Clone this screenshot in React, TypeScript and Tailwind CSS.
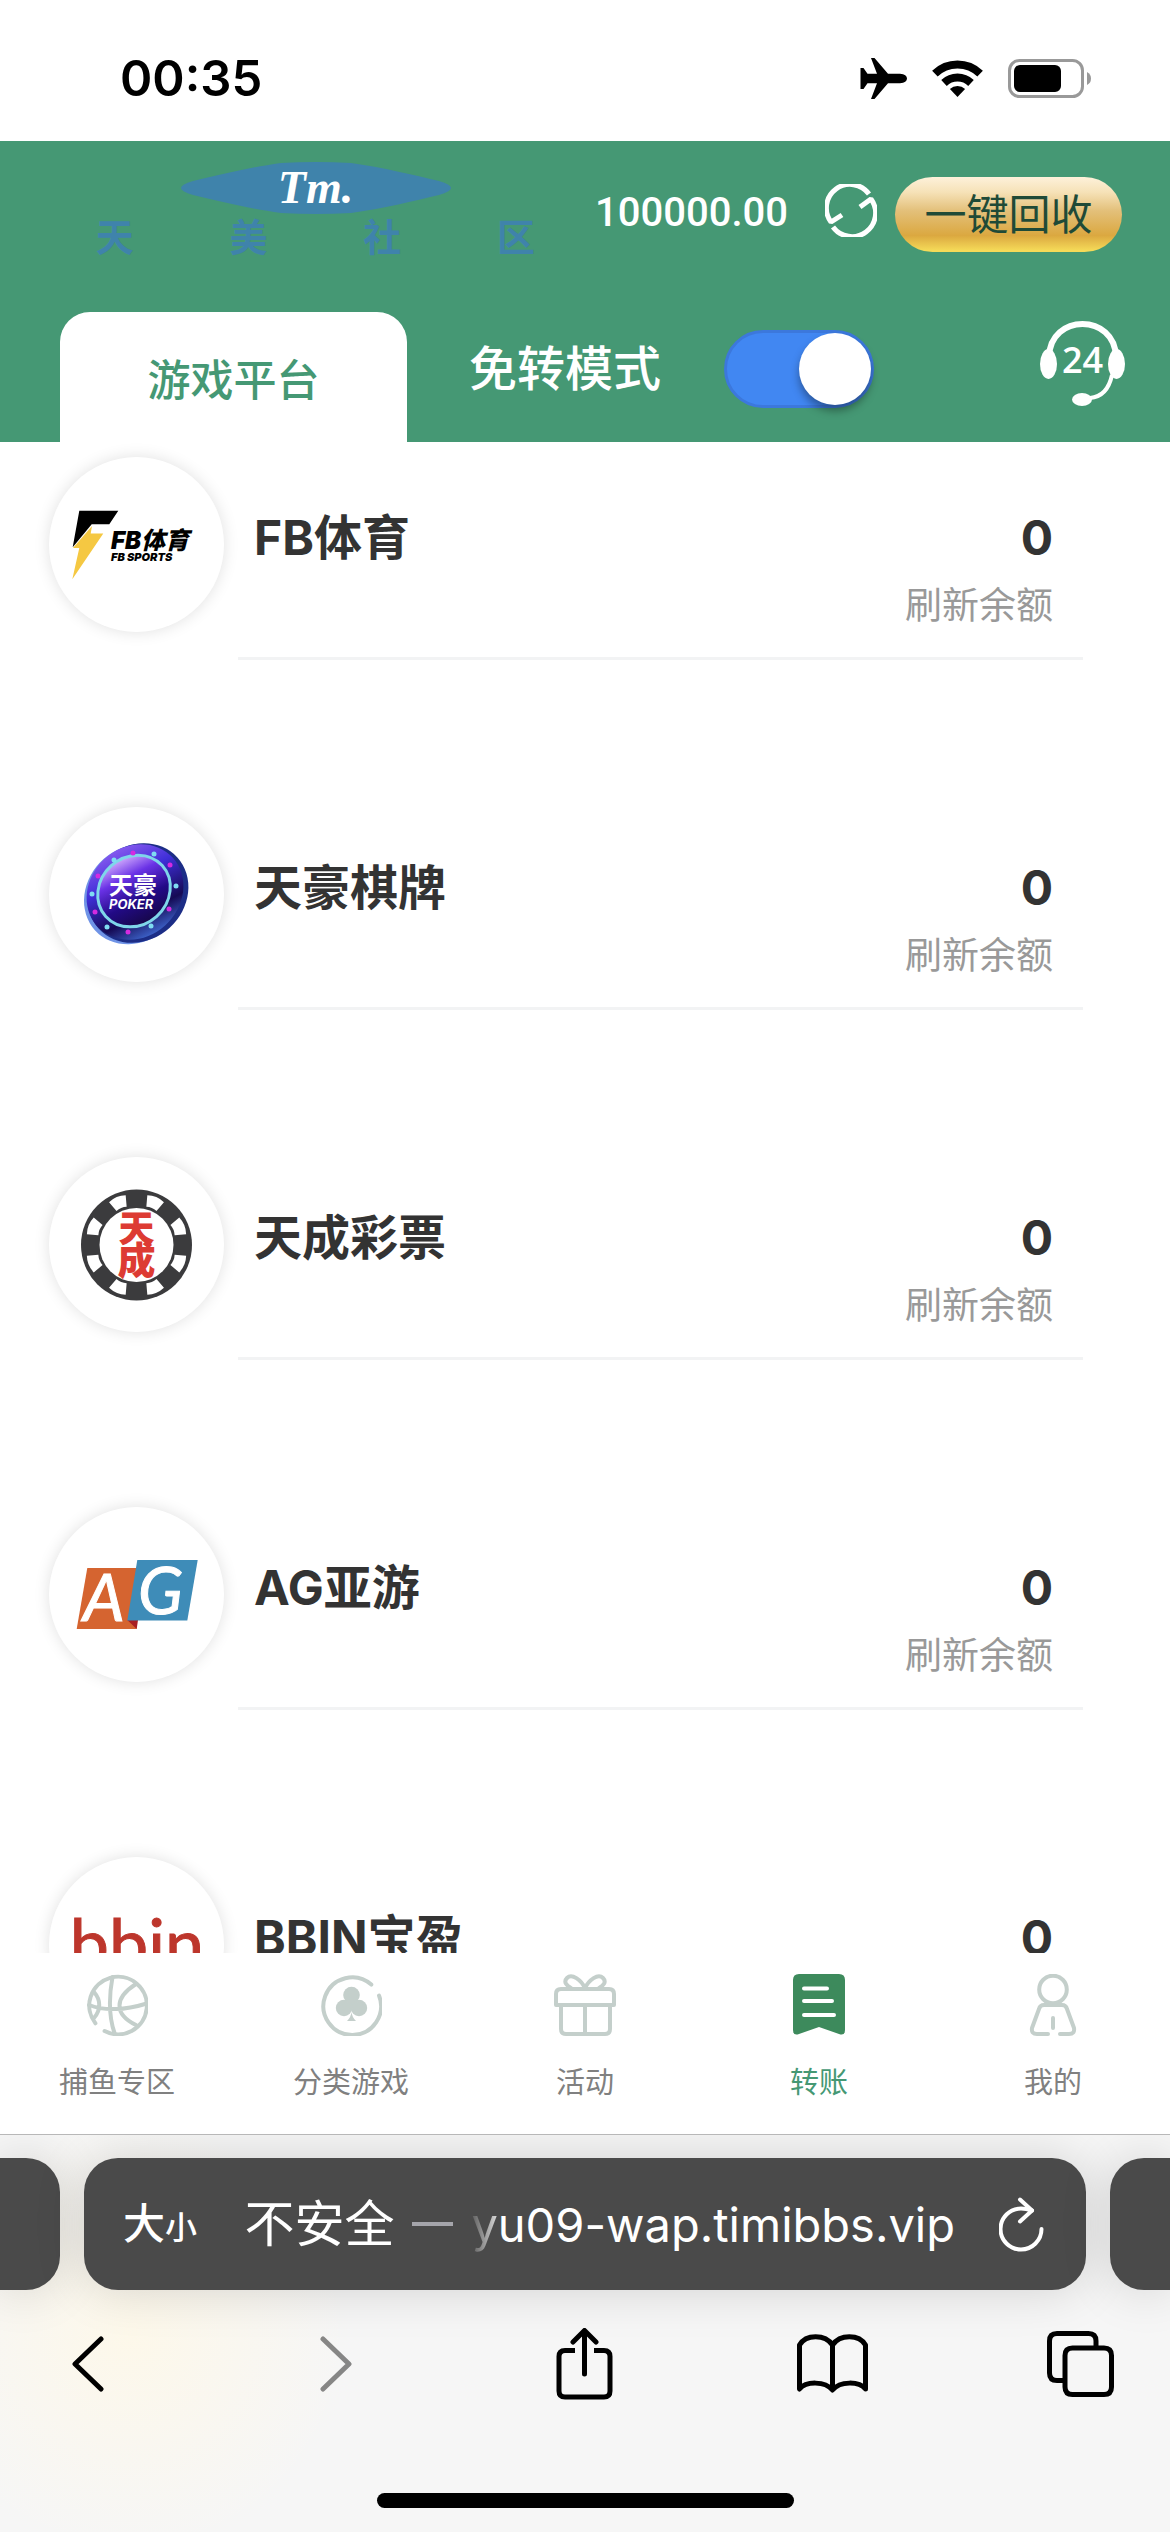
import { useState, type ReactNode } from 'react';

const CHIP_DOTS = [
  { x: 65, y: 53, fill: '#7fdcf2' },
  { x: 105, y: 47, fill: '#7fdcf2' },
  { x: 127, y: 79, fill: '#7fdcf2' },
  { x: 43, y: 87, fill: '#7fdcf2' },
  { x: 58, y: 120, fill: '#7fdcf2' },
  { x: 102, y: 119, fill: '#7fdcf2' },
  { x: 84, y: 46, fill: '#d42be0' },
  { x: 121, y: 58, fill: '#d42be0' },
  { x: 49, y: 69, fill: '#d42be0' },
  { x: 46, y: 105, fill: '#d42be0' },
  { x: 79, y: 125, fill: '#d42be0' },
  { x: 120, y: 102, fill: '#d42be0' },
];

const CHIP_SLOTS = [22.5, 67.5, 112.5, 157.5, 202.5, 247.5, 292.5, 337.5];

function FbLogo() {
  return (
    <svg viewBox="0 0 175 175" className="size-full">
      <path d="M30.3 53.7H69.3L60.3 67.3H42.7L23.7 90.3Z" fill="#000" />
      <path d="M43 69L41.7 76.5H54.3L23.3 122.3L30.3 91H24Z" fill="#f5c842" />
      <text className="font-['Inter','Noto_Sans_CJK_SC',sans-serif] font-black italic">
        <tspan x="62" y="92" className="text-[24px]">
          FB体育
        </tspan>
        <tspan x="62" y="104" className="text-[11px]">
          FB SPORTS
        </tspan>
      </text>
    </svg>
  );
}

function PokerLogo() {
  return (
    <svg viewBox="0 0 175 175" className="size-full">
      <defs>
        <linearGradient id="chipBase" x1="0.7" y1="0" x2="0.4" y2="1">
          <stop offset="0" stopColor="#8b5cf0" />
          <stop offset="0.35" stopColor="#3f2fd8" />
          <stop offset="0.75" stopColor="#150a55" />
          <stop offset="1" stopColor="#3c62c8" />
        </linearGradient>
        <linearGradient id="chipFace" x1="0.7" y1="0" x2="0.4" y2="1">
          <stop offset="0" stopColor="#d9b4ff" />
          <stop offset="0.3" stopColor="#6a32e6" />
          <stop offset="0.65" stopColor="#220a86" />
          <stop offset="1" stopColor="#160748" />
        </linearGradient>
      </defs>
      <ellipse cx="86" cy="87" rx="54" ry="47" transform="rotate(-42 86 87)" fill="#6f93e6" />
      <ellipse cx="89" cy="86" rx="53" ry="47" transform="rotate(-42 89 86)" fill="#1c2d86" />
      <ellipse cx="86" cy="85" rx="51" ry="45" transform="rotate(-42 86 85)" fill="url(#chipBase)" />
      <ellipse
        cx="85"
        cy="84"
        rx="38"
        ry="34"
        transform="rotate(-42 85 84)"
        fill="url(#chipFace)"
        stroke="#7fd6ea"
        strokeWidth="3"
      />
      {CHIP_DOTS.map((d) => (
        <circle key={`${d.x}-${d.y}`} cx={d.x} cy={d.y} r="2.5" fill={d.fill} />
      ))}
      <text fill="#fff" className="font-['Inter','Noto_Sans_CJK_SC',sans-serif] font-bold">
        <tspan x="60" y="87" className="text-[24px]">
          天豪
        </tspan>
        <tspan x="60" y="102" className="text-[13px] italic">
          POKER
        </tspan>
      </text>
    </svg>
  );
}

function LotteryLogo() {
  return (
    <svg viewBox="0 0 175 175" className="size-full">
      <circle cx="87.5" cy="88" r="55.5" fill="#3b3b3d" />
      {CHIP_SLOTS.map((angle) => (
        <path
          key={angle}
          d="M78.5 38Q87.5 34.5 96.5 38L93 49Q87.5 47 82 49Z"
          fill="#fff"
          transform={`rotate(${angle} 87.5 88)`}
        />
      ))}
      <circle cx="87.5" cy="88" r="37" fill="#fff" />
      <text fill="#dd3b33" textAnchor="middle" className="font-['Noto_Sans_CJK_SC',sans-serif] font-black">
        <tspan x="87.5" y="85" className="text-[36px]">
          天
        </tspan>
        <tspan x="87.5" y="117" className="text-[38px]">
          成
        </tspan>
      </text>
    </svg>
  );
}

function AgLogo() {
  return (
    <svg viewBox="0 0 175 175" className="size-full">
      <path d="M38.3 61H87.7V122H27.7Z" fill="#d56430" />
      <path d="M78.3 113H89L87.7 122Z" fill="#a81f24" />
      <path d="M88.3 53H148.7L138.3 113.5H78.3Z" fill="#3e8cb8" />
      <text fill="#fff" stroke="#fff" className="font-['Lato',sans-serif] text-[66px] italic">
        <tspan x="34" y="114">
          A
        </tspan>
        <tspan x="89" y="107">
          G
        </tspan>
      </text>
    </svg>
  );
}

function BbinLogo() {
  return (
    <svg viewBox="0 0 175 175" className="size-full">
      <text
        x="88"
        y="112"
        textAnchor="middle"
        fill="#bd362c"
        stroke="#bd362c"
        strokeWidth="1"
        className="font-['Lato',sans-serif] text-[70px]"
      >
        bbin
      </text>
    </svg>
  );
}

const PLATFORMS = [
  { id: 'fb', name: 'FB体育', balance: '0', logo: <FbLogo /> },
  { id: 'th', name: '天豪棋牌', balance: '0', logo: <PokerLogo /> },
  { id: 'tc', name: '天成彩票', balance: '0', logo: <LotteryLogo /> },
  { id: 'ag', name: 'AG亚游', balance: '0', logo: <AgLogo /> },
  { id: 'bbin', name: 'BBIN宝盈', balance: '0', logo: <BbinLogo /> },
];

function NavIcon({ children }: { children: ReactNode }) {
  return (
    <svg
      viewBox="0 0 62 62"
      fill="none"
      stroke="#c4cfcb"
      strokeWidth="4"
      strokeLinecap="round"
      strokeLinejoin="round"
      className="size-[62px]"
    >
      {children}
    </svg>
  );
}

const NAV = [
  {
    label: '捕鱼专区',
    icon: (
      <NavIcon>
        <path d="M9.4 49.3A28.8 28.8 0 1 1 18.6 57" />
        <path d="M26.5 3C23 22 22 40 28.5 59M3 31C18 37 40 36 59 30M50 10C28 24 28 40 50 51M8 18C15 26 15 36 8 44" />
      </NavIcon>
    ),
  },
  {
    label: '分类游戏',
    icon: (
      <NavIcon>
        <path d="M51.3 10.6A28.8 28.8 0 1 0 59 21.6" />
        <g fill="#c4cfcb" stroke="none">
          <circle cx="31.5" cy="21" r="8.3" />
          <circle cx="24" cy="34" r="8.2" />
          <circle cx="39" cy="34" r="8.2" />
          <path d="M27 24H36V34H27ZM31.5 38Q32 43 36 47H27Q31 43 31.5 38Z" />
        </g>
      </NavIcon>
    ),
  },
  {
    label: '活动',
    icon: (
      <NavIcon>
        <path d="M2 31V20Q2 15 7 15H55Q60 15 60 20V31ZM7 32V55Q7 60 12 60H51Q56 60 56 55V32M31 32V59" />
        <path d="M31 14C27 6 18 -1 13 4C9 8 13 12 17 14M31 14C35 6 44 -1 49 4C53 8 49 12 45 14" />
      </NavIcon>
    ),
  },
  {
    label: '转账',
    active: true,
    icon: (
      <NavIcon>
        <path
          d="M11 0H51Q57 0 57 6V56Q57 62 51 60L31 53L11 60Q5 62 5 56V6Q5 0 11 0Z"
          fill="#3d8a5c"
          stroke="none"
        />
        <path d="M16 14.5H39M16 27H44M16 41H46" stroke="#fff" />
      </NavIcon>
    ),
  },
  {
    label: '我的',
    icon: (
      <NavIcon>
        <circle cx="31" cy="15.5" r="13.8" />
        <path d="M26 60H15Q9 60 10 54L17 35Q18 31 22 31H40Q44 31 45 35L52 54Q53 60 47 60H38M31 44V54" />
      </NavIcon>
    ),
  },
];

function StatusBar() {
  return (
    <div className="flex h-[141px] shrink-0 items-center justify-between bg-white pt-[15px] pr-[79px] pl-[120px]">
      <span className="text-[49px] leading-none font-semibold">00:35</span>
      <div className="flex items-center gap-[25px]">
        <svg viewBox="0 0 47 41" className="h-[41px] w-[47px]">
          <path d="M11 0H14.5L28 15.8H40Q47 16.5 47 20.5T40 25.2H28L14.5 41H11L17 25.2H7.5L3.5 31H0.5V10H3.5L7.5 15.8H17Z" />
        </svg>
        <svg viewBox="0 0 51 37" className="h-[37px] w-[51px]" fill="none" stroke="#000">
          <path d="M2.9 13.6A32.5 32.5 0 0 1 48.1 13.6" strokeWidth="8" />
          <path d="M12 23A19.5 19.5 0 0 1 39 23" strokeWidth="8" />
          <path d="M25.5 37L17.9 29.1A11 11 0 0 1 33.1 29.1Z" fill="#000" stroke="none" />
        </svg>
        <svg viewBox="0 0 83 39" className="h-[39px] w-[83px]">
          <rect x="1.5" y="1.5" width="73" height="36" rx="10" fill="none" stroke="#999" strokeWidth="3" />
          <rect x="6" y="6" width="47" height="27" rx="6" />
          <path d="M79 13Q83 15 83 19.5T79 26Z" fill="#999" />
        </svg>
      </div>
    </div>
  );
}

function Header() {
  const [auto, setAuto] = useState(true);

  return (
    <header className="flex shrink-0 flex-col bg-[#459874] pt-[20px]">
      <div className="flex items-start pr-[48px] pl-[48px]">
        {/* Brand */}
        <div className="flex w-[535px] shrink-0 flex-col items-center">
          <div className="relative flex h-[54px] w-[270px] items-center justify-center">
            <svg viewBox="0 0 270 54" className="absolute inset-0 size-full">
              <path
                d="M100 2Q135 0 170 2C205 7 232 14 258 20Q282 27 258 34C232 40 205 47 170 52Q135 54 100 52C65 47 38 40 12 34Q-12 27 12 20C38 14 65 7 100 2Z"
                fill="#3f83ab"
              />
            </svg>
            <span className="relative font-['Liberation_Serif',serif] text-[46px] leading-none font-bold text-white italic">
              Tm.
            </span>
          </div>
          <div className="flex w-full justify-around font-['Noto_Sans_CJK_SC',sans-serif] text-[38px] leading-[40px] font-bold text-[#3f83ab]">
            <span>天</span>
            <span>美</span>
            <span>社</span>
            <span>区</span>
          </div>
        </div>

        <div className="flex flex-1 items-center justify-between pt-[16px] pl-[12px]">
          <span className="pb-[4px] font-['Roboto',sans-serif] text-[40px] leading-none font-medium text-white">
            100000.00
          </span>
          <div className="flex shrink-0 items-center gap-[18px]">
            <button aria-label="刷新" className="pb-[8px]">
              <svg viewBox="0 0 52 53" className="block h-[53px] w-[52px]" fill="none" stroke="#fff" strokeWidth="5">
                <path d="M44 10A23.2 23.2 0 0 0 6 38L17 31" strokeLinejoin="bevel" />
                <path d="M8 43A23.4 23.4 0 0 0 46 15L35 23" strokeLinejoin="bevel" />
              </svg>
            </button>
            <button className="h-[75px] w-[227px] rounded-full bg-[linear-gradient(180deg,#fdf1da_0%,#f6e2b8_20%,#e3c07a_45%,#dba840_78%,#f5da58_98%)] text-[42px] leading-none text-[#1f4a37]">
              一键回收
            </button>
          </div>
        </div>
      </div>

      <div className="flex items-end pt-[57px] pr-[45px] pl-[60px]">
        <button className="h-[130px] w-[347px] rounded-t-[30px] bg-white pt-[7px] text-[43px] font-medium text-[#459874]">
          游戏平台
        </button>
        <div className="flex flex-1 items-end justify-between pb-[34px]">
          <label className="flex items-center gap-[63px] pl-[62px] text-[48px] leading-none font-medium text-white">
            免转模式
            <input
              type="checkbox"
              role="switch"
              checked={auto}
              onChange={(e) => setAuto(e.target.checked)}
              className="peer sr-only"
            />
            <span className="flex h-[78px] w-[150px] items-center rounded-full border-[3px] border-[#3c78dc] bg-[#4187f2] peer-checked:justify-end">
              <span className="size-[72px] rounded-full bg-white shadow-[0_6px_8px_rgba(0,0,0,0.35)]" />
            </span>
          </label>
          <button aria-label="客服" className="pb-[2px]">
            <svg viewBox="0 0 85 85" className="block size-[85px]" fill="none" stroke="#fff">
              <path d="M9 36C10 -8 75 -8 76 36" strokeWidth="6" />
              <path d="M72 54C69 68 62 76 50 77" strokeWidth="4" />
              <g fill="#fff" stroke="none">
                <ellipse cx="8.5" cy="43" rx="8.5" ry="15" />
                <ellipse cx="76.5" cy="43" rx="8.5" ry="15" />
                <ellipse cx="42" cy="78.5" rx="10" ry="6.5" />
                <text x="42.5" y="52" textAnchor="middle" className="font-['Open_Sans',sans-serif] text-[36px] font-semibold">
                  24
                </text>
              </g>
            </svg>
          </button>
        </div>
      </div>
    </header>
  );
}

function PlatformList() {
  return (
    <ul className="min-h-0 flex-1 overflow-hidden pt-[15px]">
      {PLATFORMS.map((p) => (
        <li key={p.id} className="mb-[147px] flex gap-[14px] pr-[87px] pl-[49px]">
          <div className="size-[175px] shrink-0 rounded-full bg-white shadow-[0_0_16px_rgba(0,0,0,0.12)]">
            {p.logo}
          </div>
          <div className="flex h-[203px] flex-1 justify-between border-b-[3px] border-[#f2f3f4] pt-[45px] pr-[30px] pl-[16px]">
            <p className="text-[48px] leading-[72px] font-bold text-[#333]">{p.name}</p>
            <div className="flex flex-col items-end">
              <p className="text-[48px] leading-[72px] font-bold text-[#333]">{p.balance}</p>
              <button className="text-[37px] leading-[64px] text-[#999]">刷新余额</button>
            </div>
          </div>
        </li>
      ))}
    </ul>
  );
}

function BottomNav() {
  return (
    <nav className="grid h-[181px] shrink-0 grid-cols-5 bg-white">
      {NAV.map((item) => (
        <a
          key={item.label}
          href="#"
          className={`flex flex-col items-center gap-[24px] pt-[21px] text-[29px] leading-[46px] ${
            item.active ? 'text-[#459874]' : 'text-[#808080]'
          }`}
        >
          {item.icon}
          {item.label}
        </a>
      ))}
    </nav>
  );
}

function BrowserBar() {
  return (
    <footer className="shrink-0 overflow-hidden border-t border-[#b8b8b8] bg-[#f6f6f6] bg-[radial-gradient(circle_at_130px_200px,#fdf8ea,transparent_220px)]">
      <div className="flex gap-[24px] pt-[23px]">
        <div className="h-[132px] w-[60px] rounded-r-[34px] bg-[#4a4a4a] shadow-[0_0_50px_rgba(0,0,0,0.15)]" />
        <div className="flex h-[132px] flex-1 items-center rounded-[34px] bg-[#4a4a4a] pr-[42px] pl-[39px] text-white shadow-[0_0_50px_rgba(0,0,0,0.15)]">
          <button aria-label="大小" className="flex items-baseline leading-none font-medium">
            <span className="text-[42px]">大</span>
            <span className="text-[32px]">小</span>
          </button>
          <div className="flex flex-1 items-center justify-end gap-[18px] pr-[44px] text-[47px] leading-none whitespace-nowrap">
            <span className="text-[50px]">不安全</span>
            <span className="h-[4px] w-[41px] bg-[#a5a5ab]" />
            <span>
              <span className="bg-linear-to-r from-white/10 to-white/80 bg-clip-text text-transparent">y</span>
              u09-wap.timibbs.vip
            </span>
          </div>
          <button aria-label="重新载入">
            <svg
              viewBox="0 0 45 55"
              className="block h-[55px] w-[45px]"
              fill="none"
              stroke="#fff"
              strokeWidth="4"
              strokeLinecap="round"
              strokeLinejoin="round"
            >
              <path d="M42.5 32A20.5 20.5 0 1 1 22 11.5Q27 11.5 33 13.5" />
              <path d="M21 2.5L33 13.5L21 24.5" />
            </svg>
          </button>
        </div>
        <div className="h-[132px] w-[60px] rounded-l-[34px] bg-[#4a4a4a] shadow-[0_0_50px_rgba(0,0,0,0.15)]" />
      </div>

      <div className="flex h-[148px] items-center justify-between pr-[56px] pl-[54px] [&_button]:flex [&_button]:w-[68px] [&_button]:justify-center [&_svg]:block [&_svg]:fill-none [&_svg]:stroke-black [&_svg]:stroke-[5px]">
        <button aria-label="后退">
          <svg viewBox="0 0 32 56" className="h-[56px] w-[32px]" strokeLinecap="round" strokeLinejoin="round">
            <path d="M29 3L3 28L29 53" />
          </svg>
        </button>
        <button aria-label="前进" disabled className="opacity-45">
          <svg viewBox="0 0 32 56" className="h-[56px] w-[32px]" strokeLinecap="round" strokeLinejoin="round">
            <path d="M3 3L29 28L3 53" />
          </svg>
        </button>
        <button aria-label="分享">
          <svg viewBox="0 0 57 72" className="h-[72px] w-[57px]" strokeLinecap="round" strokeLinejoin="round">
            <path d="M28.5 3V46M17 14L28.5 2.5L40 14" />
            <path d="M19 22.5H9Q3 22.5 3 28.5V63Q3 69 9 69H48Q54 69 54 63V28.5Q54 22.5 48 22.5H38" strokeLinecap="butt" />
          </svg>
        </button>
        <button aria-label="书签">
          <svg viewBox="0 0 71 60" className="h-[60px] w-[71px] shrink-0" strokeLinejoin="round">
            <path d="M2.5 11C9 0 28 0 35.5 11C43 0 62 0 68.5 11V55C62 47 43 47 35.5 56C28 47 9 47 2.5 55ZM35.5 11V56" />
          </svg>
        </button>
        <button aria-label="标签页">
          <svg viewBox="0 0 67 66" className="h-[66px] w-[67px]" strokeLinejoin="round">
            <path d="M49 16V10Q49 2.5 41.5 2.5H10Q2.5 2.5 2.5 10V42Q2.5 49.5 10 49.5H17" />
            <path d="M25.5 17H57Q64.5 17 64.5 24.5V56Q64.5 63.5 57 63.5H25.5Q18 63.5 18 56V24.5Q18 17 25.5 17Z" />
          </svg>
        </button>
      </div>

      <div className="flex justify-center pt-[55px] pb-[24px]">
        <span className="h-[15px] w-[417px] rounded-full bg-black" />
      </div>
    </footer>
  );
}

export default function App() {
  return (
    <div
      lang="zh-CN"
      className="flex h-screen w-full flex-col overflow-hidden bg-white font-['Inter','Noto_Sans_CJK_SC',sans-serif] text-black"
    >
      <StatusBar />
      <Header />
      <PlatformList />
      <BottomNav />
      <BrowserBar />
    </div>
  );
}
